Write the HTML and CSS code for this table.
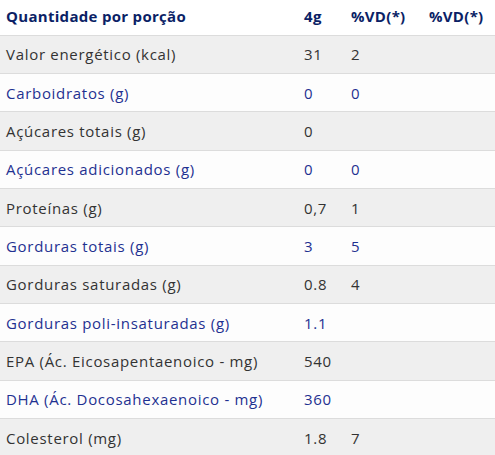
FILE: index.html
```html
<!DOCTYPE html>
<html lang="pt">
<head>
<meta charset="utf-8">
<link rel="stylesheet" href="styles.css">
</head>
<body>
<table class="nutri">
  <colgroup>
    <col class="c-label">
    <col class="c-qty">
    <col class="c-vd">
    <col class="c-vd2">
  </colgroup>
  <thead>
    <tr class="head">
      <th>Quantidade por porção</th>
      <th>4g</th>
      <th>%VD(*)</th>
      <th>%VD(*)</th>
    </tr>
  </thead>
  <tbody>
    <tr class="odd"><td>Valor energético (kcal)</td><td>31</td><td>2</td><td></td></tr>
    <tr class="even"><td>Carboidratos (g)</td><td>0</td><td>0</td><td></td></tr>
    <tr class="odd"><td>Açúcares totais (g)</td><td>0</td><td></td><td></td></tr>
    <tr class="even"><td>Açúcares adicionados (g)</td><td>0</td><td>0</td><td></td></tr>
    <tr class="odd"><td>Proteínas (g)</td><td>0,7</td><td>1</td><td></td></tr>
    <tr class="even"><td>Gorduras totais (g)</td><td>3</td><td>5</td><td></td></tr>
    <tr class="odd"><td>Gorduras saturadas (g)</td><td>0.8</td><td>4</td><td></td></tr>
    <tr class="even"><td>Gorduras poli-insaturadas (g)</td><td>1.1</td><td></td><td></td></tr>
    <tr class="odd"><td>EPA (Ác. Eicosapentaenoico - mg)</td><td>540</td><td></td><td></td></tr>
    <tr class="even"><td>DHA (Ác. Docosahexaenoico - mg)</td><td>360</td><td></td><td></td></tr>
    <tr class="odd"><td>Colesterol (mg)</td><td>1.8</td><td>7</td><td></td></tr>
  </tbody>
</table>
</body>
</html>
```
FILE: styles.css
```css
html, body {
  margin: 0;
  padding: 0;
  background: #ffffff;
}
.nutri {
  width: 495px;
  border-collapse: collapse;
  table-layout: fixed;
  font-family: "Open Sans", "DejaVu Sans", sans-serif;
  font-size: 15px;
  letter-spacing: 0.7px;
}
.c-label { width: 298px; }
.c-qty { width: 47px; }
.c-vd { width: 78px; }
.c-vd2 { width: 72px; }
.nutri th, .nutri td {
  padding: 0 0 0 6px;
  text-align: left;
  white-space: nowrap;
  overflow: hidden;
}
.head {
  height: 35px;
  background: #ffffff;
}
.head th {
  color: #0b1f66;
  font-weight: 700;
  letter-spacing: 0.3px;
  vertical-align: middle;
  padding-bottom: 2px;
}
tbody tr {
  height: 38.35px;
  border-top: 1px solid #dcdcdc;
}
.odd {
  background: #efefef;
  color: #333333;
}
.even {
  background: #fdfdfd;
  color: #1f3191;
}
```
